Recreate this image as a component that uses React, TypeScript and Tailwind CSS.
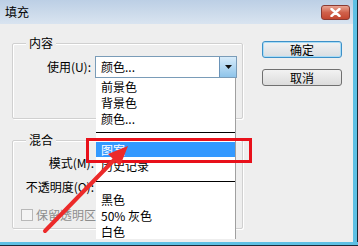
import React from "react";

const font = { fontFamily: '"Noto Sans CJK SC", "Liberation Sans", sans-serif' };

function Group({ label, className, children }: { label: string; className: string; children?: React.ReactNode }) {
  return (
    <div className={`relative w-[231px] rounded-[2px] border border-[#d0d0d0] shadow-[inset_1px_1px_0_#ffffff,1px_1px_0_#ffffff] ${className}`}>
      <span className="absolute -top-[10px] left-[13px] bg-[#eeeeee] px-[3px] text-[12px] leading-[18px] text-black">{label}</span>
      {children}
    </div>
  );
}

export default function App() {
  const items1 = ["前景色", "背景色", "颜色..."];
  const items3 = ["黑色", "50% 灰色", "白色"];

  return (
    <div className="relative h-[246px] w-[358px] overflow-hidden bg-[#eeeeee] text-[12px] text-black" style={font}>
      {/* title bar */}
      <div className="flex h-[24px] items-center bg-gradient-to-b from-[#bccfe5] to-[#d9e4f0] pl-[5px]">
        <span className="text-[12px] leading-none">填充</span>
        <div className="ml-auto mr-[8px] flex h-[15px] w-[29px] items-center justify-center rounded-[3px] border border-[#8a3a32] bg-gradient-to-b from-[#e8a493] via-[#d0614b] to-[#c3462f]">
          <svg width="11" height="9" viewBox="0 0 11 9">
            <path d="M1.5 1 L9.5 8 M9.5 1 L1.5 8" stroke="#ffffff" strokeWidth="2.4" strokeLinecap="round" />
          </svg>
        </div>
      </div>

      {/* body */}
      <div className="flex">
        <div className="flex flex-col pl-[12px] pt-[19px]">
          <Group label="内容" className="h-[76px]">
            <div className="flex items-center pt-[12px]">
              <span className="w-[78px] text-right leading-[22px]">使用(U):</span>
              <div className="ml-[4px] flex h-[22px] w-[142px] items-center border border-[#7a9cb8] bg-white">
                <span className="pl-[5px]">颜色...</span>
                <div className="ml-auto flex h-full w-[17px] items-center justify-center border-l border-[#6a93b8] bg-gradient-to-b from-[#d8ecfa] to-[#8ec4ea]">
                  <svg width="7" height="4" viewBox="0 0 7 4"><path d="M0 0 H7 L3.5 4 Z" fill="#111" /></svg>
                </div>
              </div>
            </div>
          </Group>
          <Group label="混合" className="mt-[21px] h-[89px]">
            <div className="flex flex-col pt-[14px]">
              <span className="w-[81px] text-right leading-[16px]">模式(M):</span>
              <span className="mt-[8px] w-[81px] text-right leading-[16px]">不透明度(O):</span>
              <div className="mt-[11px] flex items-center pl-[8px]">
                <div className="h-[12px] w-[12px] border border-[#b8b8b8] bg-[#f4f4f4]" />
                <span className="ml-[3px] whitespace-nowrap text-[#8d8d8d]">保留透明区</span>
              </div>
            </div>
          </Group>
        </div>

        <div className="ml-[19px] flex flex-col pt-[17px]">
          <button className="h-[17px] w-[80px] rounded-[3px] border border-[#3c90c8] bg-gradient-to-b from-[#f2f2f2] to-[#d8dde2] text-[12px] leading-none shadow-[inset_0_0_0_1px_#a9dcf6]">确定</button>
          <button className="mt-[11px] h-[17px] w-[80px] rounded-[3px] border border-[#707070] bg-gradient-to-b from-[#f2f2f2] to-[#dcdcdc] text-[12px] leading-none">取消</button>
        </div>
      </div>

      {/* dropdown list */}
      <div className="absolute left-[96px] top-[78px] h-[161px] w-[140px] overflow-hidden border-r border-[#a0a0a0] bg-white">
        <div className="pt-[1px]">
          {items1.map((t) => (
            <div key={t} className="h-[16px] pl-[5px] leading-[16px]">{t}</div>
          ))}
        </div>
        <div className="mt-[5px] h-px bg-black" />
        <div className="mt-[9px] h-[15px] bg-[#3399ff] pl-[5px] leading-[15px] text-white">图案</div>
        <div className="mt-[1px] h-[16px] pl-[5px] leading-[16px]">历史记录</div>
        <div className="mt-[7px] h-px bg-black" />
        <div className="pt-[10px]">
          {items3.map((t) => (
            <div key={t} className="h-[16px] pl-[5px] leading-[16px]">{t}</div>
          ))}
        </div>
      </div>

      {/* red highlight box */}
      <div className="absolute left-[86px] top-[138px] h-[25px] w-[166px] border-[3px] border-[#e8101a]" />

      {/* red arrow */}
      <svg className="absolute left-0 top-0" width="358" height="246" viewBox="0 0 358 246">
        <path d="M45 231 L114 160" stroke="#ec2a2a" strokeWidth="4" strokeLinecap="round" />
        <path d="M128 146 L120 166 L108 154 Z" fill="#ec2a2a" />
      </svg>

      {/* window frame right / bottom */}
      <div className="absolute right-0 top-0 h-full w-[5px] border-r border-[#1b2a38] bg-[#5ec0e4]" />
      <div className="absolute bottom-0 left-0 h-[4px] w-full border-b border-[#1b2a38] bg-[#5ec0e4]" />
    </div>
  );
}
